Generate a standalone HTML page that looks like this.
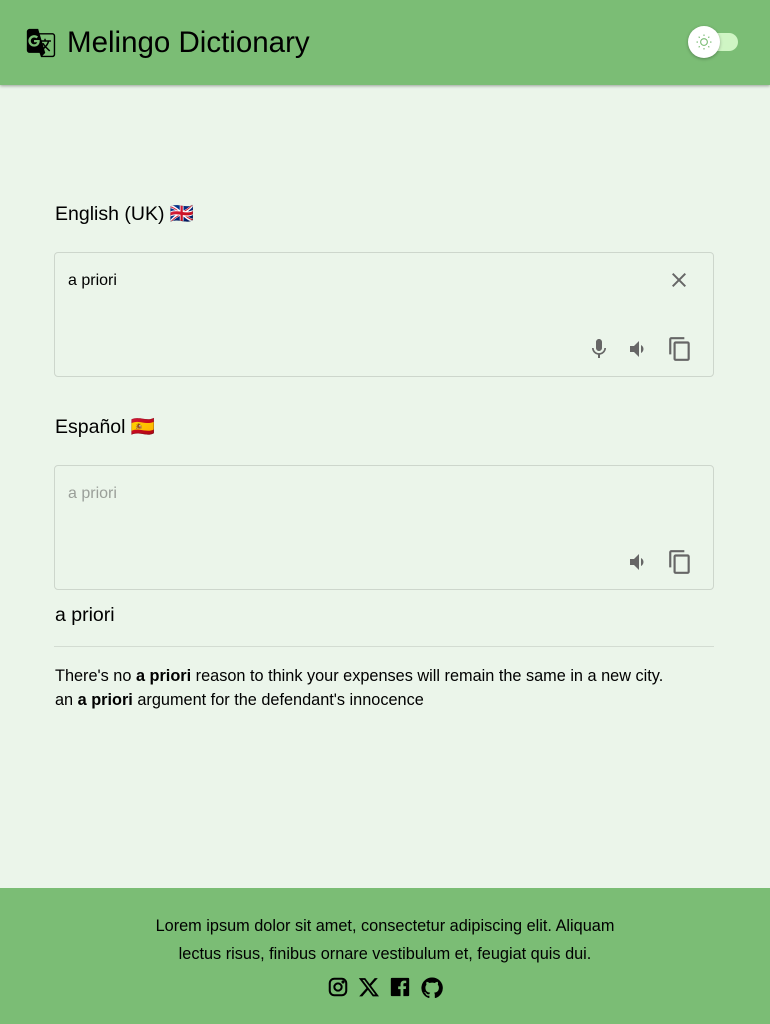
<!DOCTYPE html>
<html><head><meta charset="utf-8"><style>
*{box-sizing:border-box;margin:0;padding:0}
body{width:770px;height:1024px;background:#ebf5ea;font-family:"Liberation Sans",Arial,sans-serif;color:#000;position:relative;overflow:hidden}
header{position:absolute;top:0;left:0;width:770px;height:85px;background:#7bbd75;box-shadow:0 1px 3px rgba(0,0,0,.35)}
.logo{position:absolute;left:24px;top:26px}
.title{position:absolute;left:67px;top:26px;font-size:29.5px}
.tog{position:absolute;left:690px;top:33px;width:48px;height:18px;border-radius:9px;background:#cff5c4}
.knob{position:absolute;left:688px;top:26px;width:32px;height:32px;border-radius:50%;background:#fff;box-shadow:0 1px 3px rgba(0,0,0,.3);display:flex;align-items:center;justify-content:center}
.lbl{position:absolute;left:55px;font-size:19.5px}
.box{position:absolute;left:54px;width:660px;height:125px;border:1.5px solid #cdd6cc;border-radius:4px}
.box .t{position:absolute;left:13px;top:19px;font-size:16px}
.ic{position:absolute}
.word{position:absolute;left:55px;top:604px;font-size:19.5px}
hr{position:absolute;left:54px;top:646px;width:660px;border:0;border-top:1px solid #d3dcd2}
.ex{position:absolute;left:55px;top:664px;font-size:16.3px;line-height:24px}
footer{position:absolute;top:888px;left:0;width:770px;height:136px;background:#7bbd75;text-align:center;font-size:16.3px;line-height:28px;padding-top:24px}
.soc{display:flex;justify-content:center;gap:9px;margin-top:8px}
</style></head><body>
<header>
<svg class="logo" width="34" height="34" viewBox="0 0 24 24"><path d="M20 5h-9.12L10 2H4c-1.1 0-2 .9-2 2v13c0 1.1.9 2 2 2h7l1 3h8c1.1 0 2-.9 2-2V7c0-1.1-.9-2-2-2zM7.170 14.59c-2.25 0-4.09-1.83-4.09-4.090s1.83-4.09 4.09-4.09c1.04 0 1.99.37 2.74 1.07l.07.06-1.23 1.18-.06-.05c-.29-.27-.78-.59-1.52-.59-1.31 0-2.38 1.09-2.38 2.42s1.07 2.42 2.38 2.42c1.37 0 1.96-.87 2.12-1.46H7.08V9.91h3.95l.01.07c.04.21.05.4.05.61 0 2.35-1.61 4-3.92 4zm6.03-1.71c.33.6.74 1.18 1.19 1.7l-.54.53-.65-2.23zm.77-.76h-.99l-.31-1.04h3.99s-.34 1.31-1.56 2.74c-.52-.62-.89-1.23-1.13-1.7zM21 20c0 .55-.45 1-1 1h-7l2-2-.81-2.77.92-.92L17.79 18l.73-.73-2.71-2.68c.9-1.03 1.6-2.25 1.92-3.51H19v-1.04h-3.64V9h-1.04v1.04h-1.96L11.18 6H20c.55 0 1 .45 1 1v13z"/></svg>
<div class="title">Melingo Dictionary</div>
<div class="tog"></div>
<div class="knob"><svg width="18" height="18" viewBox="0 0 24 24" fill="none" stroke="#7bbd75" stroke-width="1.5"><circle cx="12" cy="12" r="4.5"/><path d="M12 2v2M12 20v2M2 12h2M20 12h2M4.9 4.9l1.4 1.4M17.7 17.7l1.4 1.4M4.9 19.1l1.4-1.4M17.7 6.3l1.4-1.4"/></svg></div>
</header>

<div class="lbl" style="top:202px">English (UK) 🇬🇧</div>
<div class="box" style="top:252px">
<div class="t">a priori</div>
<svg class="ic" style="left:612px;top:15px" width="24" height="24" viewBox="0 0 24 24" fill="#666"><path d="M19 6.41 17.59 5 12 10.59 6.41 5 5 6.41 10.59 12 5 17.59 6.41 19 12 13.41 17.59 19 19 17.59 13.41 12z"/></svg>
<svg class="ic" style="left:532px;top:84px" width="24" height="24" viewBox="0 0 24 24" fill="#666"><path d="M12 14c1.66 0 2.99-1.34 2.99-3L15 5c0-1.66-1.34-3-3-3S9 3.34 9 5v6c0 1.66 1.34 3 3 3zm5.3-3c0 3-2.54 5.1-5.3 5.1S6.7 14 6.7 11H5c0 3.41 2.72 6.23 6 6.72V21h2v-3.28c3.28-.48 6-3.3 6-6.72h-1.7z"/></svg>
<svg class="ic" style="left:572px;top:84px" width="24" height="24" viewBox="0 0 24 24" fill="#666"><path d="M3 9v6h4l5 5V4L7 9H3zm13.5 3c0-1.77-1.02-3.29-2.5-4.03v8.05c1.48-.73 2.5-2.25 2.5-4.02z"/></svg>
<svg class="ic" style="left:612px;top:83px" width="26" height="26" viewBox="0 0 24 24" fill="#666"><path d="M16 1H4c-1.1 0-2 .9-2 2v14h2V3h12V1zm3 4H8c-1.1 0-2 .9-2 2v14c0 1.1.9 2 2 2h11c1.1 0 2-.9 2-2V7c0-1.1-.9-2-2-2zm0 16H8V7h11v14z"/></svg>
</div>

<div class="lbl" style="top:415px">Español 🇪🇸</div>
<div class="box" style="top:465px">
<div class="t" style="color:#9a9f99">a priori</div>
<svg class="ic" style="left:572px;top:84px" width="24" height="24" viewBox="0 0 24 24" fill="#666"><path d="M3 9v6h4l5 5V4L7 9H3zm13.5 3c0-1.77-1.02-3.29-2.5-4.03v8.05c1.48-.73 2.5-2.25 2.5-4.02z"/></svg>
<svg class="ic" style="left:612px;top:83px" width="26" height="26" viewBox="0 0 24 24" fill="#666"><path d="M16 1H4c-1.1 0-2 .9-2 2v14h2V3h12V1zm3 4H8c-1.1 0-2 .9-2 2v14c0 1.1.9 2 2 2h11c1.1 0 2-.9 2-2V7c0-1.1-.9-2-2-2zm0 16H8V7h11v14z"/></svg>
</div>

<div class="word">a priori</div>
<hr>
<div class="ex">There's no <b>a priori</b> reason to think your expenses will remain the same in a new city.<br>an <b>a priori</b> argument for the defendant's innocence</div>

<footer>
<div>Lorem ipsum dolor sit amet, consectetur adipiscing elit. Aliquam<br>lectus risus, finibus ornare vestibulum et, feugiat quis dui.</div>
<div class="soc">
<svg width="22" height="22" viewBox="0 0 24 24" fill="none" stroke="#000" stroke-width="2.2"><rect x="3" y="3" width="18" height="18" rx="5"/><circle cx="12" cy="12" r="4"/><circle cx="17.5" cy="6.5" r=".6" fill="#000"/></svg>
<svg width="22" height="22" viewBox="0 0 24 24"><path d="M18.2 2.3h3.4l-7.4 8.4 8.7 11.5h-6.8l-5.3-7-6.1 7H1.3l7.9-9L.9 2.3h7l4.8 6.4zm-1.2 17.9h1.9L6.9 4.2H4.9z"/></svg>
<svg width="22" height="22" viewBox="0 0 24 24"><path d="M21 2H3a1 1 0 0 0-1 1v18a1 1 0 0 0 1 1h9.6v-7.7H10v-3h2.6V9c0-2.6 1.6-4 3.9-4 1.1 0 2 .1 2.3.1v2.7h-1.6c-1.3 0-1.500.6-1.5 1.5v1.9h3l-.4 3h-2.6V22H21a1 1 0 0 0 1-1V3a1 1 0 0 0-1-1z"/></svg>
<svg width="24" height="24" viewBox="0 0 24 24"><path d="M12 1.5a10.5 10.5 0 0 0-3.3 20.5c.5.1.7-.2.7-.5v-1.8c-2.9.6-3.5-1.4-3.5-1.4-.5-1.2-1.2-1.5-1.2-1.5-1-.7.1-.7.1-.7 1 .1 1.6 1.1 1.6 1.1.9 1.6 2.5 1.2 3.1.9.1-.7.4-1.2.7-1.4-2.3-.3-4.8-1.2-4.8-5.2 0-1.100.4-2.1 1.1-2.8-.1-.3-.5-1.3.1-2.8 0 0 .9-.3 2.9 1.100a10 10 0 0 1 5.3 0c2-1.4 2.9-1.1 2.9-1.1.6 1.5.2 2.5.1 2.8.7.8 1.1 1.7 1.1 2.8 0 4-2.5 4.9-4.8 5.2.4.3.7 1 .7 1.9v2.9c0 .3.2.6.7.5A10.5 10.5 0 0 0 12 1.5z"/></svg>
</div>
</footer>
</body></html>
